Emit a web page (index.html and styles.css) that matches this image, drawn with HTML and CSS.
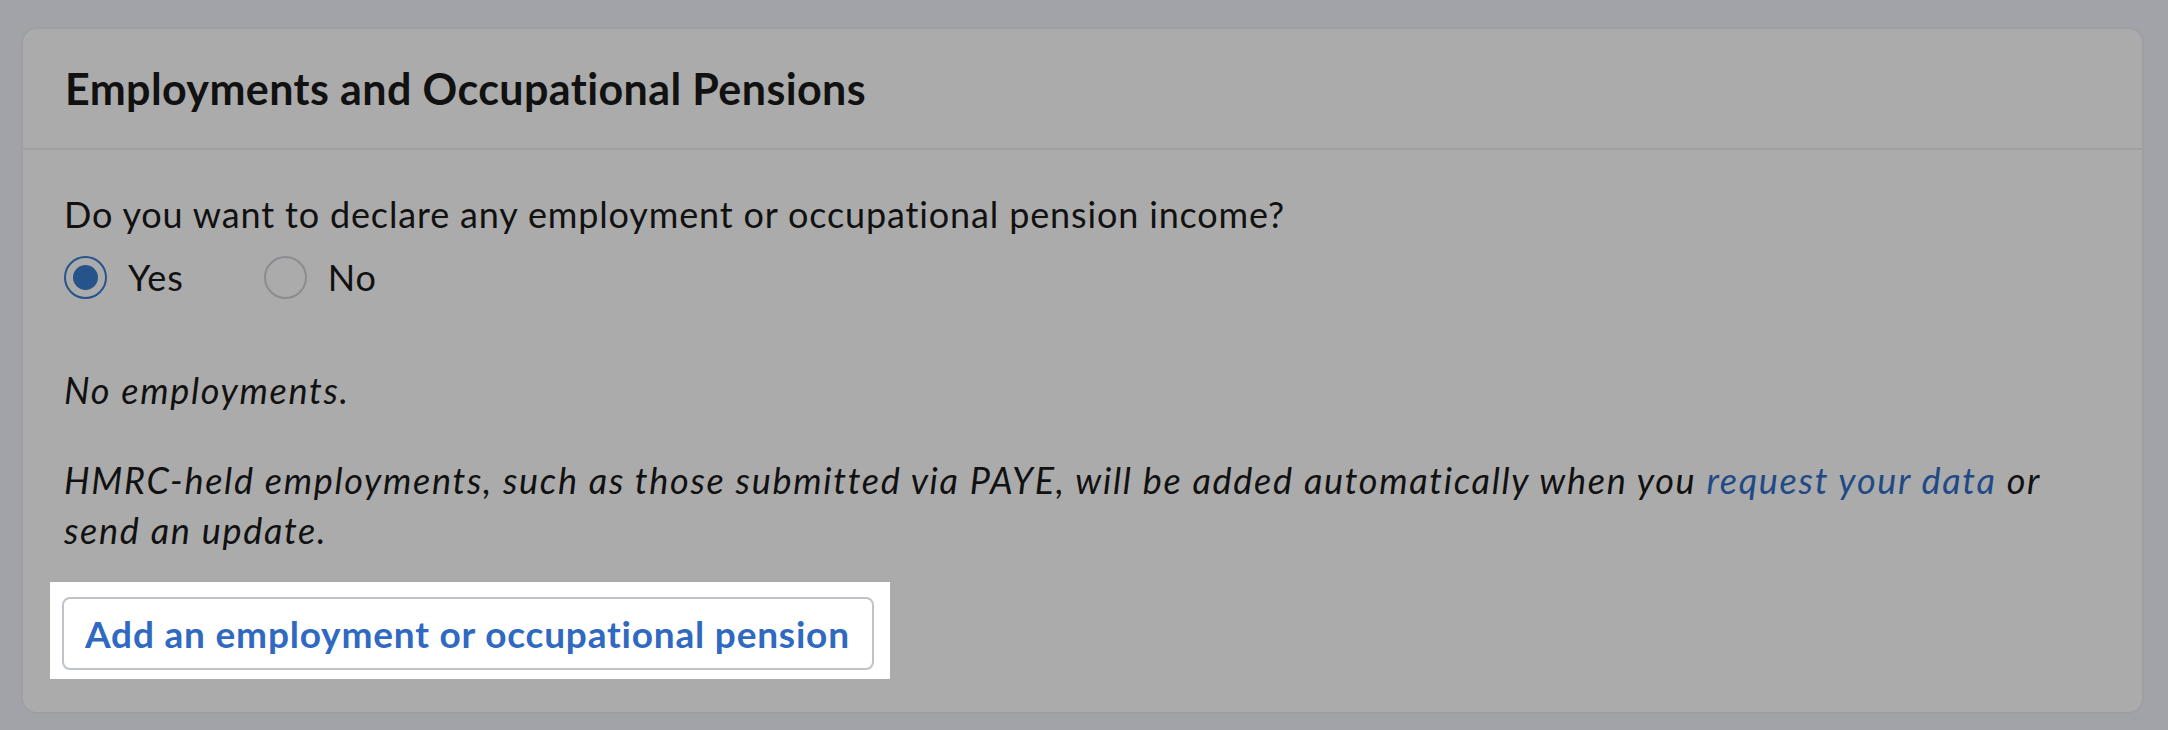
FILE: index.html
```html
<!DOCTYPE html>
<html lang="en">
<head>
    <meta charset="UTF-8">
    <meta name="viewport" content="width=device-width, initial-scale=1.0">
    <title>Employments and Occupational Pensions</title>
    <link rel="stylesheet" href="styles.css">
</head>
<body>
    <div class="card">
        <div class="card-header">
            <h2>Employments and Occupational Pensions</h2>
        </div>
        <div class="card-body">
            <p class="question">Do you want to declare any employment or occupational pension income?</p>
            <div class="radios">
                <label class="radio"><span class="dot checked"></span>Yes</label>
                <label class="radio"><span class="dot"></span>No</label>
            </div>
            <p class="note">No employments.</p>
            <p class="note hint">HMRC-held employments, such as those submitted via PAYE, will be added automatically when you <a href="#">request your data</a> or send an update.</p>
            <div class="spotlight">
                <button type="button" class="add-btn">Add an employment or occupational pension</button>
            </div>
        </div>
    </div>
</body>
</html>
```

FILE: styles.css
```css
body {
    margin: 0;
    padding: 27px 24px 16px 21px;
    background-color: #a1a3a8;
    font-family: Lato, "Open Sans", sans-serif;
    color: #111;
}

.card {
    background-color: #ababab;
    border: 2px solid #9d9fa3;
    border-radius: 16px;
}

.card-header {
    height: 119px;
    display: flex;
    align-items: center;
    padding-left: 42px;
    border-bottom: 2px solid #a0a0a1;
}

.card-header h2 {
    margin: 0;
    font-size: 43px;
    font-weight: 700;
    letter-spacing: 0.4px;
}

.card-body {
    padding: 39px 70px 33px 41px;
    font-size: 36px;
    line-height: 50px;
    letter-spacing: 0.85px;
}

.card-body p {
    margin: 0;
}

.radios {
    display: flex;
    gap: 0 80px;
    margin-top: 13px;
}

.radio {
    display: flex;
    align-items: center;
    gap: 21px;
}

.dot {
    width: 43px;
    height: 43px;
    box-sizing: border-box;
    border: 2px solid #8a8c90;
    border-radius: 50%;
    display: flex;
    align-items: center;
    justify-content: center;
}

.dot.checked {
    border-color: #28548c;
}

.dot.checked::after {
    content: "";
    width: 25px;
    height: 25px;
    border-radius: 50%;
    background-color: #26548a;
}

.note {
    font-style: italic;
    letter-spacing: 1.7px;
    margin-top: 63px !important;
}

.hint {
    margin-top: 40px !important;
}

.hint a {
    color: #1f4a86;
    text-decoration: none;
}

.spotlight {
    display: inline-block;
    margin: 27px 0 0 -14px;
    padding: 15px 16px 9px 12px;
    background-color: #fff;
    line-height: 0;
}

.add-btn {
    font-family: inherit;
    font-size: 37px;
    font-weight: 700;
    line-height: 69px;
    letter-spacing: 0.8px;
    color: #2f69c1;
    background-color: #fff;
    border: 2px solid #c0c4ca;
    border-radius: 8px;
    padding: 0 22px 0 21px;
    cursor: pointer;
}
```
